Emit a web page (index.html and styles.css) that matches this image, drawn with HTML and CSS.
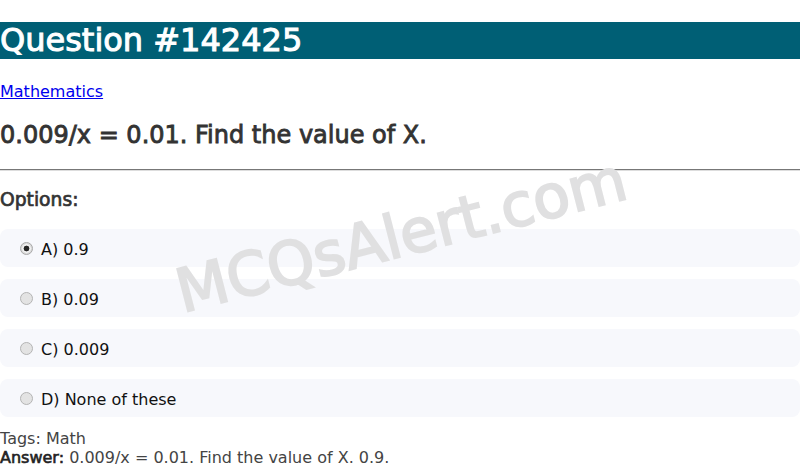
FILE: index.html
```html
<!DOCTYPE html>
<html lang="en">
<head>
<meta charset="utf-8">
<title>Question #142425</title>
<link rel="stylesheet" href="styles.css">
</head>
<body>
<h1 class="title">Question #142425</h1>
<p class="category"><a href="#">Mathematics</a></p>
<h2 class="question">0.009/x = 0.01. Find the value of X.</h2>
<hr class="rule">
<h3 class="options-title">Options:</h3>
<div class="options">
  <label class="option"><input type="radio" name="opt" checked disabled><span>A) 0.9</span></label>
  <label class="option"><input type="radio" name="opt" disabled><span>B) 0.09</span></label>
  <label class="option"><input type="radio" name="opt" disabled><span>C) 0.009</span></label>
  <label class="option"><input type="radio" name="opt" disabled><span>D) None of these</span></label>
</div>
<div class="meta">
  <div class="tags">Tags: Math</div>
  <div class="answer"><span class="answer-label">Answer:</span> 0.009/x = 0.01. Find the value of X. 0.9.</div>
</div>
<div class="watermark">MCQsAlert.com</div>
</body>
</html>
```
FILE: styles.css
```css
html, body {
  margin: 0;
  padding: 0;
  background: #ffffff;
}
body {
  font-family: "DejaVu Sans", Verdana, sans-serif;
  font-size: 16px;
  color: #222;
  position: relative;
  overflow: hidden;
  height: 467px;
}
.title {
  margin: 22px 0 23px;
  background: #005f75;
  color: #ffffff;
  font-size: 32px;
  font-weight: normal;
  line-height: 37px;
  -webkit-text-stroke: 1px #ffffff;
}
.category {
  margin: 0;
  line-height: 19px;
}
.category a {
  color: #0000ee;
}
.question {
  margin: 20px 0 20px;
  font-size: 24px;
  line-height: 28px;
  font-weight: normal;
  color: #333333;
  -webkit-text-stroke: 0.85px #333333;
}
.rule {
  margin: 0;
  border: 0;
  border-top: 1px solid #777;
  border-bottom: 1px solid #ddd;
  height: 0;
}
.options-title {
  margin: 18px 0 18px;
  font-size: 18.72px;
  line-height: 22px;
  font-weight: normal;
  color: #333333;
  -webkit-text-stroke: 0.7px #333333;
}
.options {
  display: flex;
  flex-direction: column;
  gap: 12px;
}
.option {
  display: flex;
  align-items: center;
  height: 38px;
  box-sizing: border-box;
  padding: 2px 0 0 20px;
  background: #f7f8fc;
  border-radius: 8px;
  color: #111;
}
.option input {
  -webkit-appearance: none;
  appearance: none;
  box-sizing: border-box;
  margin: 0 8px 2px 0;
  width: 13px;
  height: 13px;
  border: 1px solid #b4b4b4;
  border-radius: 50%;
  background: #e3e3e3;
}
.option input:checked {
  background: radial-gradient(circle, #262626 0 2.6px, #f2f2f2 3.2px 4px, #dcdcdc 4.6px);
  border-color: #a8a8a8;
}
.meta {
  margin-top: 12px;
  color: #444;
  line-height: 19px;
}
.answer-label {
  color: #222;
  -webkit-text-stroke: 0.6px #222;
}
.watermark {
  position: absolute;
  left: 401px;
  top: 235px;
  transform: translate(-50%, -50%) rotate(-14.4deg);
  font-size: 60px;
  line-height: 70px;
  white-space: nowrap;
  color: #e0e0e1;
  -webkit-text-stroke: 2px #e0e0e1;
  pointer-events: none;
}
```
